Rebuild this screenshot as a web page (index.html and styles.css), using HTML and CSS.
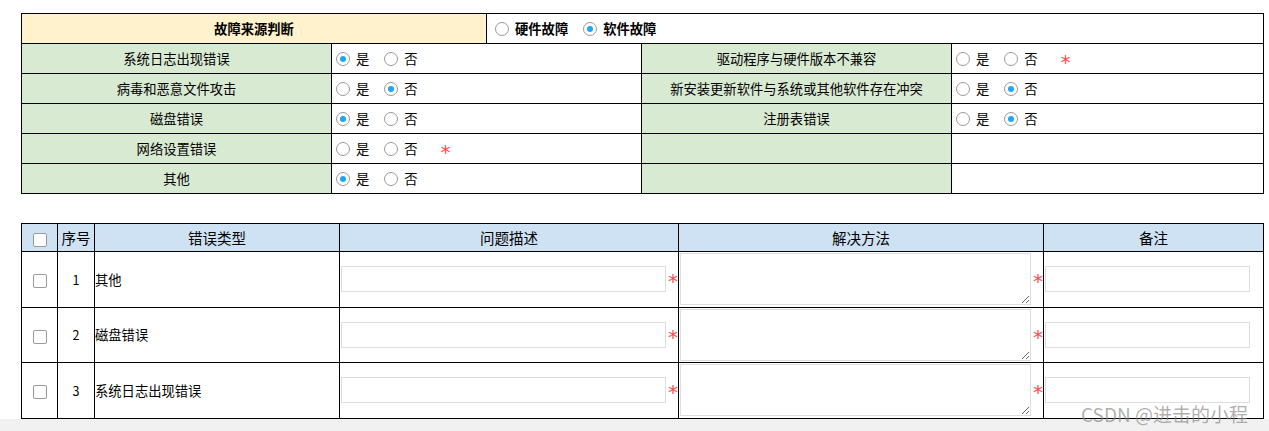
FILE: index.html
```html
<!DOCTYPE html>
<html lang="zh-CN">
<head>
    <meta charset="UTF-8">
    <title>故障来源判断</title>
    <link rel="stylesheet" href="styles.css">
</head>
<body>
    <div class="page">
        <table class="judgeTable">
            <colgroup>
                <col class="half"><col class="half"><col class="half"><col class="half">
                <col class="half"><col class="half"><col class="halfWide"><col class="halfWide">
            </colgroup>
            <tr>
                <td colspan="3" class="titleCell">故障来源判断</td>
                <td colspan="5" class="optCell sourceCell">
                    <span class="radio"></span><b class="optText">硬件故障</b>
                    <span class="radio checked"></span><b class="optText">软件故障</b>
                </td>
            </tr>
            <tr>
                <td colspan="2" class="nameCell">系统日志出现错误</td>
                <td colspan="2" class="optCell">
                    <span class="radio checked"></span><span class="optText">是</span>
                    <span class="radio"></span><span class="optText">否</span>
                </td>
                <td colspan="2" class="nameCell">驱动程序与硬件版本不兼容</td>
                <td colspan="2" class="optCell">
                    <span class="radio"></span><span class="optText">是</span>
                    <span class="radio"></span><span class="optText">否</span>
                    <span class="star">*</span>
                </td>
            </tr>
            <tr>
                <td colspan="2" class="nameCell">病毒和恶意文件攻击</td>
                <td colspan="2" class="optCell">
                    <span class="radio"></span><span class="optText">是</span>
                    <span class="radio checked"></span><span class="optText">否</span>
                </td>
                <td colspan="2" class="nameCell">新安装更新软件与系统或其他软件存在冲突</td>
                <td colspan="2" class="optCell">
                    <span class="radio"></span><span class="optText">是</span>
                    <span class="radio checked"></span><span class="optText">否</span>
                </td>
            </tr>
            <tr>
                <td colspan="2" class="nameCell">磁盘错误</td>
                <td colspan="2" class="optCell">
                    <span class="radio checked"></span><span class="optText">是</span>
                    <span class="radio"></span><span class="optText">否</span>
                </td>
                <td colspan="2" class="nameCell">注册表错误</td>
                <td colspan="2" class="optCell">
                    <span class="radio"></span><span class="optText">是</span>
                    <span class="radio checked"></span><span class="optText">否</span>
                </td>
            </tr>
            <tr>
                <td colspan="2" class="nameCell">网络设置错误</td>
                <td colspan="2" class="optCell">
                    <span class="radio"></span><span class="optText">是</span>
                    <span class="radio"></span><span class="optText">否</span>
                    <span class="star">*</span>
                </td>
                <td colspan="2" class="nameCell"></td>
                <td colspan="2" class="optCell"></td>
            </tr>
            <tr>
                <td colspan="2" class="nameCell">其他</td>
                <td colspan="2" class="optCell">
                    <span class="radio checked"></span><span class="optText">是</span>
                    <span class="radio"></span><span class="optText">否</span>
                </td>
                <td colspan="2" class="nameCell"></td>
                <td colspan="2" class="optCell"></td>
            </tr>
        </table>

        <table class="errorTable">
            <colgroup>
                <col class="colCheck">
                <col class="colNo">
                <col class="colType">
                <col class="colDesc">
                <col class="colFix">
                <col>
            </colgroup>
            <thead>
                <tr>
                    <th><span class="checkbox"></span></th>
                    <th>序号</th>
                    <th>错误类型</th>
                    <th>问题描述</th>
                    <th>解决方法</th>
                    <th>备注</th>
                </tr>
            </thead>
            <tbody>
                <tr>
                    <td class="center"><span class="checkbox"></span></td>
                    <td class="center num">1</td>
                    <td>其他</td>
                    <td><div class="field"><input type="text" class="textInput"><span class="star">*</span></div></td>
                    <td><div class="field"><textarea class="textArea"></textarea><span class="star">*</span></div></td>
                    <td><input type="text" class="textInput noteInput"></td>
                </tr>
                <tr>
                    <td class="center"><span class="checkbox"></span></td>
                    <td class="center num">2</td>
                    <td>磁盘错误</td>
                    <td><div class="field"><input type="text" class="textInput"><span class="star">*</span></div></td>
                    <td><div class="field"><textarea class="textArea"></textarea><span class="star">*</span></div></td>
                    <td><input type="text" class="textInput noteInput"></td>
                </tr>
                <tr>
                    <td class="center"><span class="checkbox"></span></td>
                    <td class="center num">3</td>
                    <td>系统日志出现错误</td>
                    <td><div class="field"><input type="text" class="textInput"><span class="star">*</span></div></td>
                    <td><div class="field"><textarea class="textArea"></textarea><span class="star">*</span></div></td>
                    <td><input type="text" class="textInput noteInput"></td>
                </tr>
            </tbody>
        </table>
    </div>
    <div class="bottomBar"></div>
    <div class="watermark">CSDN @进击的小程</div>
</body>
</html>
```

FILE: styles.css
```css
body {
    margin: 0;
    font-family: "Noto Sans CJK SC", "Liberation Sans", sans-serif;
    font-size: 13.3px;
    color: #000;
    background: #fff;
}

.page {
    padding: 13px 0 0 21px;
    width: 1243px;
}

table {
    border-collapse: collapse;
    table-layout: fixed;
    width: 1243px;
}

td, th {
    border: 1px solid #000;
    padding: 0;
}

/* top judge table */
.half { width: 155px; }
.halfWide { width: 156px; }

.judgeTable td {
    height: 29px;
}

.titleCell {
    background: #fff2cc;
    text-align: center;
    font-weight: bold;
}

.nameCell {
    background: #d9ead3;
    text-align: center;
}

.optCell {
    padding-left: 4px;
    white-space: nowrap;
}

.sourceCell {
    padding-left: 8px;
}

.radio {
    display: inline-block;
    box-sizing: border-box;
    width: 14px;
    height: 14px;
    border: 1px solid #9a9a9a;
    border-radius: 50%;
    vertical-align: -2px;
    position: relative;
    background: #fff;
}

.radio.checked::after {
    content: "";
    position: absolute;
    left: 3px;
    top: 3px;
    width: 6px;
    height: 6px;
    border-radius: 50%;
    background: #1ea7f7;
}

.optText {
    margin: 0 12px 0 6px;
}

.star {
    display: inline-block;
    color: #ff4a4a;
    font-family: "DejaVu Sans", sans-serif;
    font-size: 20px;
    line-height: 14px;
    height: 14px;
    margin-left: 8px;
    vertical-align: -5px;
}

/* bottom error table */
.errorTable {
    margin-top: 29px;
}

.colCheck { width: 36px; }
.colNo { width: 37px; }
.colType { width: 245px; }
.colDesc { width: 339px; }
.colFix { width: 365px; }

.errorTable th {
    background: #cfe2f3;
    font-weight: normal;
    font-size: 14.5px;
    height: 27px;
    text-align: center;
}

.errorTable td {
    height: 54.6px;
}

.center {
    text-align: center;
}

.num {
    font-size: 12.5px;
}

.checkbox {
    display: inline-block;
    box-sizing: border-box;
    width: 14px;
    height: 14px;
    border: 1px solid #999;
    border-radius: 2px;
    vertical-align: middle;
    background: #fff;
}

.field {
    display: flex;
    align-items: center;
}

.field .star {
    margin-left: 2px;
    padding-top: 4px;
}

.textInput {
    box-sizing: border-box;
    height: 26px;
    width: 325px;
    margin-left: 1px;
    border: 1px solid #ddd;
    padding: 0 4px;
    outline: none;
}

.textArea {
    box-sizing: border-box;
    height: 52px;
    width: 351px;
    margin: 1px 0 1px 1px;
    border: 1px solid #ddd;
    resize: vertical;
    display: block;
}

.noteInput {
    width: 205px;
    display: block;
}

.bottomBar {
    height: 13px;
    background: #f1f1f1;
}

.watermark {
    position: absolute;
    left: 1081px;
    top: 400px;
    font-size: 19px;
    color: rgba(140, 140, 140, 0.7);
    white-space: nowrap;
}
```
